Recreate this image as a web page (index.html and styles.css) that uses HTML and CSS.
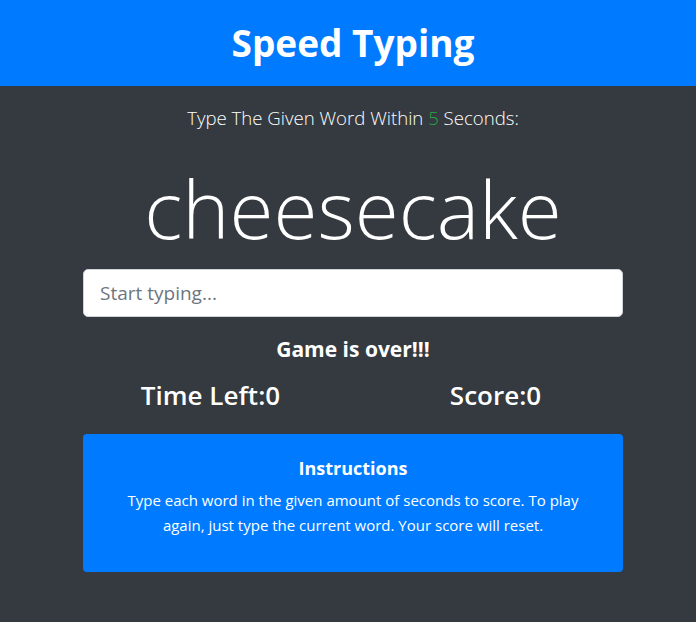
FILE: index.html
```html
<!DOCTYPE html>
<html>
<head>
<meta charset="utf-8">
<link rel="stylesheet" href="styles.css">
</head>
<body>
<header class="topbar"><h1 class="title">Speed Typing</h1></header>
<main class="container">
  <p class="lead">Type The Given Word Within <span class="secs">5</span> Seconds:</p>
  <h2 class="word">cheesecake</h2>
  <input class="typing" type="text" placeholder="Start typing...">
  <h4 class="msg">Game is over!!!</h4>
  <div class="stats">
    <h3 class="stat">Time Left:0</h3>
    <h3 class="stat">Score:0</h3>
  </div>
  <section class="card">
    <h5 class="card-title">Instructions</h5>
    <p class="card-text">Type each word in the given amount of seconds to score. To play again, just type the current word. Your score will reset.</p>
  </section>
</main>
</body>
</html>
```
FILE: styles.css
```css
html, body { margin: 0; padding: 0; }
body {
  background: #343a40;
  color: #fff;
  font-family: "Open Sans", "Noto Sans", sans-serif;
  min-height: 622px;
}
.topbar {
  background: #007bff;
  height: 86px;
  padding-left: 10px;
  display: flex;
  align-items: center;
  justify-content: center;
}
.title {
  margin: 0;
  font-size: 37px;
  font-weight: 700;
  line-height: 1.2;
}
.container {
  width: 540px;
  margin: 0 0 0 calc(50% - 265px);
  display: flex;
  flex-direction: column;
  align-items: stretch;
  text-align: center;
}
.lead {
  margin: 20px 0 0;
  font-size: 18.6px;
  font-weight: 300;
  line-height: 24px;
}
.secs { color: #28a745; }
.word {
  margin: 28px 0 0;
  font-size: 80px;
  font-weight: 300;
  line-height: 100px;
}
.typing {
  margin-top: 11px;
  box-sizing: border-box;
  height: 48px;
  padding: 8px 16px;
  font-family: inherit;
  font-size: 19px;
  border: 1px solid #ced4da;
  border-radius: 5px;
  background: #fff;
  color: #495057;
  outline: none;
}
.typing::placeholder { color: #6c757d; }
.msg {
  margin: 18px 0 0;
  font-size: 21px;
  font-weight: 700;
  line-height: 28px;
}
.stats {
  display: flex;
  justify-content: space-around;
  margin: 14px -3px 0 -27px;
}
.stat {
  margin: 0;
  font-size: 26px;
  font-weight: 600;
  line-height: 36px;
}
.card {
  margin-top: 21px;
  background: #007bff;
  border-radius: 4px;
  padding: 22px 34px 34px;
}
.card-title {
  margin: 0 0 8px;
  font-size: 18px;
  font-weight: 700;
  line-height: 24px;
}
.card-text {
  margin: 0;
  font-size: 15px;
  line-height: 25px;
}
```
